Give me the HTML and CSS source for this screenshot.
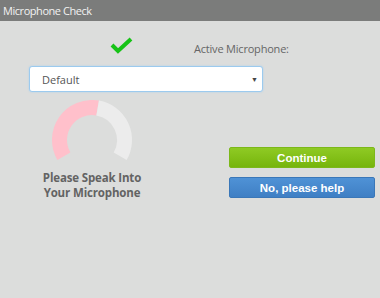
FILE: index.html
```html
<!DOCTYPE html>
<html lang="en">

<head>
    <meta charset="UTF-8">
    <title>Microphone Check</title>
    <link rel="stylesheet" href="styles.css">
</head>

<body>
    <div class="header">Microphone Check</div>
    <div class="content">
        <div class="top-row">
            <div class="check-col">
                <svg class="check" width="24" height="20" viewBox="0 0 24 20">
                    <polyline points="3,10 9,16 22,4" fill="none" stroke="#17c317" stroke-width="4" />
                </svg>
            </div>
            <div class="mic-label">Active Microphone:</div>
        </div>
        <div class="select-box">
            <span>Default</span>
            <span class="arrow">&#9660;</span>
        </div>
        <div class="main-row">
            <div class="meter">
                <svg class="gauge" width="100" height="70" viewBox="0 0 100 70">
                    <path d="M21.85 56.25 A32.5 32.5 0 0 1 55.64 7.99" fill="none" stroke="#ffc0cb" stroke-width="15" />
                    <path d="M55.64 7.99 A32.5 32.5 0 0 1 78.15 56.25" fill="none" stroke="#ececec" stroke-width="15" />
                </svg>
                <div class="speak-text">Please Speak Into<br>Your Microphone</div>
            </div>
            <div class="buttons">
                <button class="btn continue-btn">Continue</button>
                <button class="btn help-btn">No, please help</button>
            </div>
        </div>
    </div>
</body>

</html>
```

FILE: styles.css
```css
body {
    margin: 0;
    padding: 0;
    background-color: #dcdddc;
    font-family: "Open Sans", sans-serif;
}

.header {
    height: 21px;
    line-height: 21px;
    padding-left: 3px;
    background-color: #7b7c7b;
    color: #f2f2f2;
    font-size: 11px;
    letter-spacing: -0.45px;
}

.content {
    padding-left: 29px;
}

.top-row {
    display: flex;
    height: 45px;
}

.check-col {
    width: 165px;
}

.check {
    display: block;
    margin: 14px 0 0 80px;
}

.mic-label {
    padding-top: 20px;
    font-size: 11px;
    letter-spacing: -0.2px;
    color: #666;
}

.select-box {
    box-sizing: border-box;
    width: 234px;
    height: 26px;
    display: flex;
    align-items: center;
    justify-content: space-between;
    padding: 0 4px 0 12px;
    background-color: #fff;
    border: 1px solid #9ccaee;
    border-radius: 3px;
    box-shadow: 0 0 2px #a8d0f0;
    font-size: 11px;
    color: #555;
}

.arrow {
    font-size: 7px;
    color: #444;
}

.main-row {
    display: flex;
    margin-top: 8px;
}

.meter {
    width: 126px;
    text-align: center;
}

.gauge {
    display: block;
    margin: 0 auto;
}

.speak-text {
    font-size: 11.5px;
    font-weight: bold;
    line-height: 15px;
    letter-spacing: -0.15px;
    color: #636363;
}

.buttons {
    margin: 47px 0 0 74px;
    display: flex;
    flex-direction: column;
    gap: 9px;
}

.btn {
    width: 146px;
    height: 21px;
    border-radius: 2px;
    font-family: "Liberation Sans", Arial, sans-serif;
    font-size: 11.5px;
    font-weight: bold;
    color: #fff;
    cursor: pointer;
}

.continue-btn {
    background: linear-gradient(#8fca24, #76b50c);
    border: 1px solid #7cb81a;
}

.help-btn {
    background: linear-gradient(#4f92d6, #3f7fc4);
    border: 1px solid #3a77b8;
}
```
